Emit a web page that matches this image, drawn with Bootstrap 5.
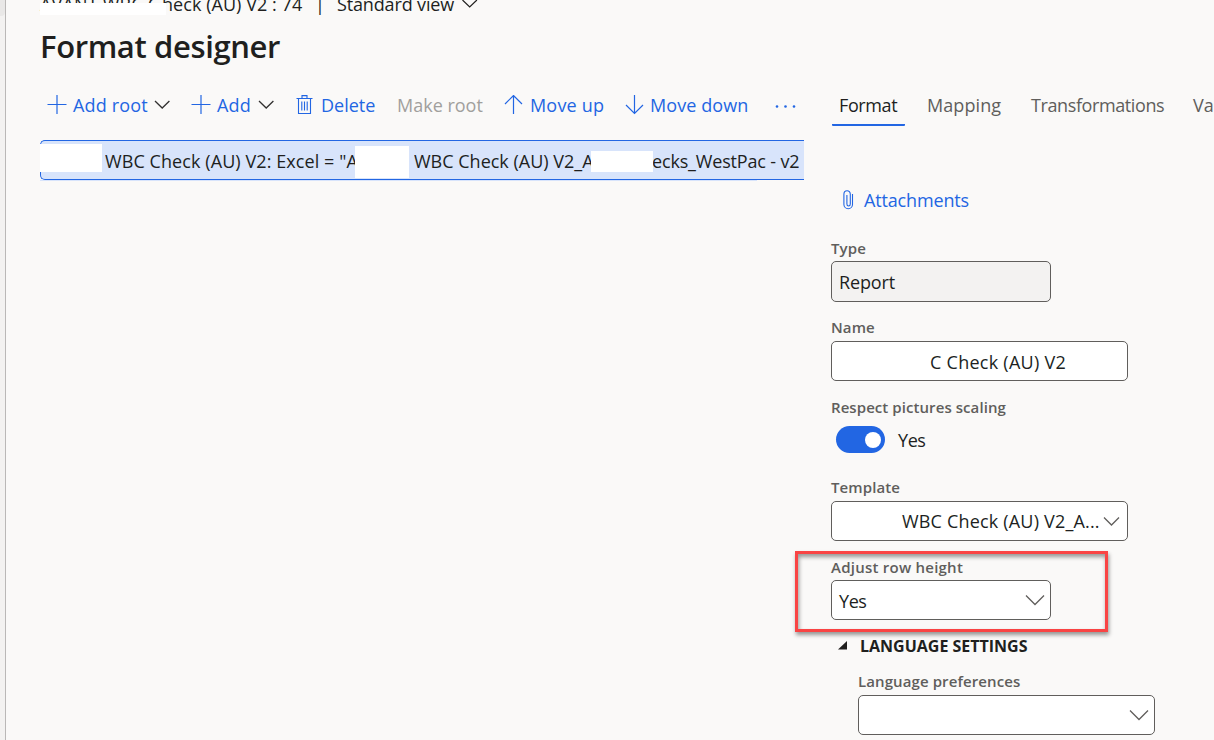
<!DOCTYPE html>
<html lang="en">
<head>
<meta charset="utf-8">
<title>Format designer</title>
<link href="https://cdn.jsdelivr.net/npm/bootstrap@5.3.0/dist/css/bootstrap.min.css" rel="stylesheet">
<style>
  body { height:740px; overflow:hidden; background:#faf9f8; color:#201f1e; font-family:"Open Sans","Noto Sans",sans-serif; font-size:18px; line-height:24px; }
  svg { display:block; flex:none; fill:none; }
  .rail { width:6px; background:#f3f2f1; border-right:1px solid #bab8b7; }
  .rail-tab { width:5px; height:16px; background:#e9e8e7; border-radius:0 0 4px 0; }
  .workspace { width:798px; padding-left:34px; }
  .crumbs { margin-top:-8px; height:24px; }
  .crumb-mask { left:0; top:11px; width:126px; height:12px; }
  .page-title { font-size:31px; line-height:42px; font-weight:600; letter-spacing:-.38px; margin:9px 0 0; }
  .toolbar { height:40px; margin-top:18px; padding-left:7px; color:#2266e3; }
  .slot { flex:none; white-space:nowrap; display:block; }
  .blank { background:#fff; flex:none; position:relative; }
  .off { color:#a19f9d; }
  .tight { letter-spacing:-.15px; } .tighter { letter-spacing:-.4px; } .loose { letter-spacing:.18px; }
  .tree-row { width:764px; height:40px; margin-top:15px; background:#d8e4fb; border:1px solid #2266e3; border-right:0; border-radius:5px 0 0 5px; }
  .tree-row .slot { overflow:hidden; line-height:40px; height:38px; }
  .tree-shade { width:717px; height:1px; background:#d8e4fb; }
  .side { width:410px; padding-left:27px; }
  .tabs { height:41px; margin-top:85px; color:#605e5c; line-height:40px; padding-left:1px; }
  .tab-on { width:73px; height:41px; border-bottom:2px solid #2266e3; border-radius:1px; padding-left:7px; color:#201f1e; }
  .attach { color:#2266e3; margin-top:62px; height:24px; padding-left:12px; }
  .cap { font-size:15px; line-height:20px; font-weight:600; color:#605e5c; white-space:nowrap; letter-spacing:.1px; }
  .box { border:1px solid #605e5c; border-radius:5px; background:#fff; height:40px; padding:0 7px; white-space:nowrap; }
  .narrow { width:220px; } .wide { width:297px; }
  .locked { background:#f3f2f1; height:41px; }
  .switch-track { width:49px; height:27px; border-radius:14px; background:#2266e3; padding-right:4px; margin-left:5px; }
  .knob { width:16px; height:16px; border-radius:50%; background:#fff; }
  .section-title { font-size:16px; line-height:20px; font-weight:700; }
  .callout-frame { left:795px; top:551px; width:313px; height:81px; border:3px solid #f94444; box-shadow:1px 3px 4px rgba(0,0,0,.4), inset 1px 3px 4px rgba(0,0,0,.4); pointer-events:none; }
</style>
<script src="https://cdn.jsdelivr.net/npm/bootstrap@5.3.0/dist/js/bootstrap.bundle.min.js"></script>
</head>
<body class="position-relative">
<div class="d-flex h-100">
  <nav class="rail flex-shrink-0"><div class="rail-tab"></div></nav>
  <main class="workspace flex-shrink-0">
    <div class="crumbs d-flex align-items-center position-relative">
      <span class="slot loose" style="width:122px">AVANT WBC C</span>
      <span class="slot" style="width:153px;letter-spacing:.05px">heck (AU) V2 : 74</span>
      <span class="slot" style="width:22px">|</span>
      <span class="slot tight" style="width:125px">Standard view</span>
      <svg width="16" height="10" stroke="#201f1e" stroke-width="1.2"><path d="M.5 1l7.2 7 7.2-7"/></svg>
      <span class="blank crumb-mask position-absolute"></span>
    </div>
    <h1 class="page-title">Format designer</h1>
    <div class="toolbar d-flex align-items-center">
      <svg style="width:26px" height="20" stroke="#2266e3" stroke-width="1.2"><path d="M10 0v19M.5 9.5h19"/></svg>
      <span class="slot loose" style="width:81px">Add root</span>
      <svg style="width:37px" height="12" stroke="#323130" stroke-width="1.3"><path d="M1 2l7.2 7 7.2-7"/></svg>
      <svg style="width:26px" height="20" stroke="#2266e3" stroke-width="1.2"><path d="M10 0v19M.5 9.5h19"/></svg>
      <span class="slot loose" style="width:41px">Add</span>
      <svg style="width:38px" height="12" stroke="#323130" stroke-width="1.3"><path d="M1 2l7.2 7 7.2-7"/></svg>
      <svg style="width:25px" height="20" stroke="#2266e3" stroke-width="1.1"><path d="M.5 3.500h16M6 3V.6h5V3M2.500 4v14.500h12V4M5.800 6.500v9M8.500 6.500v9M11.200 6.500v9"/></svg>
      <span class="slot" style="width:76px">Delete</span>
      <span class="slot off" style="width:107px">Make root</span>
      <svg style="width:26px" height="20" stroke="#2266e3" stroke-width="1.2"><path d="M9.5 19V1M1 9l8.500-8.500L18 9"/></svg>
      <span class="slot loose" style="width:95px">Move up</span>
      <svg style="width:25px" height="20" stroke="#2266e3" stroke-width="1.2"><path d="M9.500 0v18M1 10l8.500 8.500L18 10"/></svg>
      <span class="slot" style="width:125px;letter-spacing:.08px">Move down</span>
      <svg style="width:22px" height="6" class="mt-1"><g fill="#2266e3"><circle cx="2" cy="2.500" r="1.300"/><circle cx="10.500" cy="2.500" r="1.300"/><circle cx="19" cy="2.500" r="1.300"/></g></svg>
    </div>
    <div class="tree-row d-flex">
      <span class="blank" style="width:62px;height:28px;margin:3px 3px 0 -1px"></span>
      <span class="slot" style="width:250px;letter-spacing:.08px">WBC Check (AU) V2: Excel = "A</span>
      <span class="blank" style="width:54px;height:32px;margin:5px 5px 0 0"></span>
      <span class="slot" style="width:177px">WBC Check (AU) V2_A</span>
      <span class="blank" style="width:62px;height:21px;margin-top:10px"></span>
      <span class="slot" style="margin-left:-1px;letter-spacing:-.17px">ecks_WestPac - v2</span>
    </div>
    <div class="tree-shade"></div>
  </main>
  <aside class="side flex-shrink-0">
    <div class="tabs d-flex">
      <span class="slot tab-on tighter">Format</span>
      <span class="slot ps-4" style="width:128px;margin-left:-2px;letter-spacing:.08px">Mapping</span>
      <span class="slot tighter" style="width:162px">Transformations</span>
      <span class="slot">Va</span>
    </div>
    <div class="attach d-flex align-items-center">
      <svg style="width:21px" height="20" stroke="#2266e3" stroke-width="1.1"><path d="M9.500 4v10.500a4.300 4.200 0 0 1-8.600 0V4.200a3.200 3.500 0 0 1 6.400 0v9.800a1.700 2 0 0 1-3.400 0V5"/></svg>
      <span class="tight">Attachments</span>
    </div>
    <div class="cap" style="margin-top:26px">Type</div>
    <div class="box narrow locked d-flex align-items-center tight" style="margin-top:3px;padding-top:1px">Report</div>
    <div class="cap" style="margin-top:15px">Name</div>
    <div class="box wide d-flex align-items-center mt-1" style="padding-top:2px"><span style="margin-left:91px;letter-spacing:.26px">C Check (AU) V2</span></div>
    <div class="cap" style="margin-top:16px;letter-spacing:.07px">Respect pictures scaling</div>
    <div class="d-flex align-items-center" style="margin-top:9px">
      <div class="switch-track d-flex align-items-center justify-content-end"><span class="knob"></span></div>
      <span class="tighter" style="margin-left:13px">Yes</span>
    </div>
    <div class="cap tight" style="margin-top:24px">Template</div>
    <div class="box wide d-flex align-items-center" style="margin-top:4px"><span class="loose" style="margin:0 4px 0 63px;width:197px">WBC Check (AU) V2_A...</span>
      <svg width="17" height="11" stroke="#605e5c" stroke-width="1.3"><path d="M1 1.500l7.500 7.500L16 1.500"/></svg></div>
    <div class="cap" style="margin-top:16px;letter-spacing:.24px">Adjust row height</div>
    <div class="box narrow d-flex align-items-center justify-content-between" style="margin-top:3px;padding-right:5px"><span class="tighter" style="padding-top:2px">Yes</span>
      <svg width="20" height="12" stroke="#605e5c" stroke-width="1.300"><path d="M1 1.500l9 9 9-9"/></svg></div>
    <div class="section-title d-flex align-items-center" style="margin-top:16px;padding-left:7px">
      <svg style="width:22px" height="10"><path d="M9 0v8.500H0z" fill="#201f1e"/></svg>LANGUAGE SETTINGS</div>
    <div style="padding-left:27px">
      <div class="cap" style="margin-top:15px">Language preferences</div>
      <div class="box wide d-flex align-items-center justify-content-end" style="margin-top:4px;padding-right:5px">
        <svg width="20" height="12" stroke="#605e5c" stroke-width="1.300"><path d="M1 1.500l9 9 9-9"/></svg></div>
    </div>
  </aside>
</div>
<div class="callout-frame position-absolute"></div>
</body>
</html>
